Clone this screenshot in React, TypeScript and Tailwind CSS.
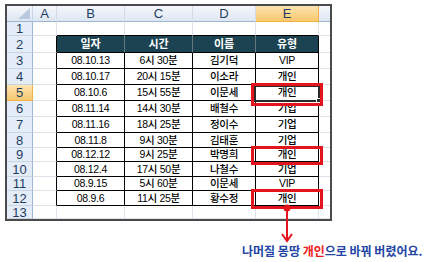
import React from 'react';

const rows: [string, string, string, string][] = [
  ['08.10.13', '6시 30분', '김기덕', 'VIP'],
  ['08.10.17', '20시 15분', '이소라', '개인'],
  ['08.10.6', '15시 55분', '이문세', '개인'],
  ['08.11.14', '14시 30분', '배철수', '기업'],
  ['08.11.16', '18시 25분', '정이수', '기업'],
  ['08.11.8', '9시 30분', '김태훈', '기업'],
  ['08.12.12', '9시 25분', '박명희', '개인'],
  ['08.12.4', '17시 50분', '나철수', '기업'],
  ['08.9.15', '5시 60분', '이문세', 'VIP'],
  ['08.9.6', '11시 25분', '황수정', '개인'],
];

const RowHeader = ({ n }: { n: number }) => (
  <div
    className={`flex items-center justify-center border-r border-b text-[13px] leading-none ${
      n === 5
        ? 'border-r-[#f0b04a] border-b-[#f0b04a] bg-linear-to-b from-[#fde4b0] to-[#f8c86c] text-[#1f3d63]'
        : 'border-r-[#9eb6ce] border-b-[#c9d5e4] bg-[#e4ecf7] text-[#1f3d63]'
    }`}
  >
    {n}
  </div>
);

export default function App() {
  const bodyRows = Array.from({ length: 13 }, (_, i) => i + 1);

  return (
    <div className="relative h-[262px] w-[439px] overflow-hidden bg-white font-['Liberation_Sans','Noto_Sans_CJK_KR',sans-serif]">
      <div className="ml-[5px] mt-[4px] w-[327px] border-2 border-[#4a4a4a]">
        <div className="grid grid-cols-[26px_24px_68px_68px_63px_63px_11px] grid-rows-[16px_14px_17px_16px_16px_16px_16px_16px_15px_14px_15px_14px_15px_13px]">
          {/* column headers */}
          <div className="relative border-r border-b border-r-[#c9d5e4] border-b-[#9eb6ce] bg-linear-to-b from-[#f5f8fc] to-[#dde6f2]">
            <svg className="absolute right-[2px] bottom-[2px]" width="12" height="11" viewBox="0 0 12 11">
              <path d="M12 0 L12 11 L0 11 Z" fill="#b9cade" />
            </svg>
          </div>
          {['A', 'B', 'C', 'D', 'E'].map((l) => (
            <div
              key={l}
              className={`flex items-center justify-center border-r border-b text-[13px] leading-none text-[#1f3d63] ${
                l === 'E'
                  ? 'border-r-[#f0b04a] border-b-[#f0b04a] bg-linear-to-b from-[#fde4b0] to-[#f8c86c]'
                  : 'border-r-[#d3dce8] border-b-[#9eb6ce] bg-linear-to-b from-[#f5f8fc] to-[#dde6f2]'
              }`}
            >
              {l}
            </div>
          ))}
          <div className="border-b border-b-[#9eb6ce] bg-linear-to-b from-[#f5f8fc] to-[#dde6f2]" />

          {bodyRows.map((r) => {
            const inTable = r >= 2 && r <= 12;
            const record = r >= 3 && r <= 12 ? rows[r - 3] : null;
            return (
              <React.Fragment key={r}>
                <RowHeader n={r} />
                <div
                  className={`border-r border-b border-b-[#dde2ea] ${
                    inTable ? 'border-r-black' : 'border-r-[#dde2ea]'
                  }`}
                />
                {[0, 1, 2, 3].map((c) => {
                  if (r === 1)
                    return <div key={c} className="border-r border-b border-r-[#dde2ea] border-b-black" />;
                  if (r === 2)
                    return (
                      <div
                        key={c}
                        className={`flex items-center justify-center border-r border-b border-b-black bg-[#1b4351] text-[11px] font-bold text-white ${
                          c === 3 ? 'border-r-black' : 'border-r-[#66777c]'
                        }`}
                      >
                        {['일자', '시간', '이름', '유형'][c]}
                      </div>
                    );
                  if (record)
                    return (
                      <div
                        key={c}
                        className="flex items-center justify-center border-r border-b border-black text-[10.5px] leading-none font-medium tracking-[-0.3px] text-black"
                      >
                        {record[c]}
                      </div>
                    );
                  return <div key={c} className="border-r border-b border-r-[#dde2ea] border-b-[#dde2ea]" />;
                })}
                <div className="border-b border-b-[#dde2ea]" />
              </React.Fragment>
            );
          })}
        </div>
      </div>

      <p className="ml-[242px] mt-[22px] font-['Noto_Sans_CJK_KR',sans-serif] text-[12px] leading-[16px] font-bold text-[#2244a4]">
        나머질 몽땅 <span className="text-[#ee1b1b]">개인</span>으로 바꿔 버렸어요.
      </p>

      {/* active cell E5 */}
      <div className="absolute left-[254px] top-[85px] h-[17px] w-[66px] border-2 border-[#2a2a2a]">
        <div className="absolute -right-[3px] -bottom-[3px] h-[5px] w-[5px] border border-white bg-[#2a2a2a]" />
      </div>

      {/* red highlight boxes */}
      <div className="absolute left-[251px] top-[83px] h-[23px] w-[72px] border-[3px] border-[#e3141b]" />
      <div className="absolute left-[251px] top-[146px] h-[19px] w-[72px] border-[3px] border-[#e3141b]" />
      <div className="absolute left-[251px] top-[189px] h-[20px] w-[72px] border-[3px] border-[#e3141b]" />

      <svg className="pointer-events-none absolute left-0 top-0" width="439" height="262" viewBox="0 0 439 262">
        <circle cx="287" cy="208" r="3.5" fill="#e3141b" />
        <path d="M287 208 V241" stroke="#e3141b" strokeWidth="2" />
        <path d="M282 234 L287 241 L292 234" stroke="#e3141b" strokeWidth="2" fill="none" />
      </svg>
    </div>
  );
}
